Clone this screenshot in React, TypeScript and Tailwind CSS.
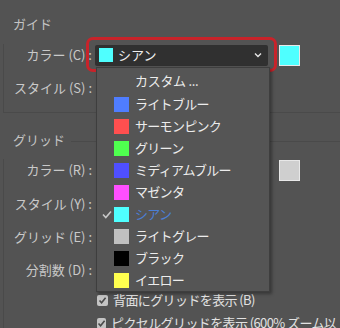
import React from "react";

const FONT = { fontFamily: '"Noto Sans CJK JP", "Noto Sans", sans-serif' };

const items: { name: string; color: string; selected?: boolean }[] = [
  { name: "ライトブルー", color: "#4f7dff" },
  { name: "サーモンピンク", color: "#ff4f4f" },
  { name: "グリーン", color: "#4fff4f" },
  { name: "ミディアムブルー", color: "#4f4fff" },
  { name: "マゼンタ", color: "#ff4fff" },
  { name: "シアン", color: "#4fffff", selected: true },
  { name: "ライトグレー", color: "#c0c0c0" },
  { name: "ブラック", color: "#000000" },
  { name: "イエロー", color: "#ffff4f" },
];

function Label({ children }: { children: React.ReactNode }) {
  return <div className="w-[88px] shrink-0 whitespace-pre text-right text-[#c9c9c9] leading-[22px]">{children}</div>;
}

function CheckBox({ children }: { children: React.ReactNode }) {
  return (
    <div className="flex h-[20px] items-center pl-[93px]">
      <div className="flex h-[11px] w-[11px] items-center justify-center rounded-[2px] bg-[#c4c4c4]">
        <svg width="9" height="9" viewBox="0 0 9 9">
          <polyline points="1.5,4.5 3.6,6.8 7.6,1.8" fill="none" stroke="#4a4a4a" strokeWidth="1.6" />
        </svg>
      </div>
      <span className="ml-[5px] whitespace-nowrap tracking-[-0.6px] text-[#e2e2e2]">{children}</span>
    </div>
  );
}

export default function App() {
  return (
    <div className="relative h-[328px] w-[340px] overflow-hidden bg-[#535353] text-[13px]" style={FONT}>
      {/* Group: guide */}
      <div className="pt-[14px]">
        <div className="flex h-[20px] items-center">
          <span className="pl-[13px] pr-[6px] text-[#c4c4c4]">ガイド</span>
        </div>
        <div className="ml-[3px] border-b border-l border-[#4a4a4a] pb-[13px]">
          <div className="mt-[10px] flex h-[22px] items-center">
            <Label>カラー (C) :</Label>
            <div className="ml-[3px] flex h-[21px] w-[173px] items-center rounded-[2px] bg-[#303030]">
              <div className="ml-[4px] h-[14px] w-[14px] bg-[#4fffff]" />
              <span className="ml-[5px] text-[#f0f0f0]">シアン</span>
              <svg className="ml-auto mr-[6px]" width="8" height="6" viewBox="0 0 8 6">
                <polyline points="1,1.5 4,4.5 7,1.5" fill="none" stroke="#e6e6e6" strokeWidth="1.4" />
              </svg>
            </div>
            <div className="ml-[11px] h-[21px] w-[21px] border border-[#e8e8e8] bg-[#4fffff]" />
          </div>
          <div className="mt-[11px] flex h-[22px] items-center">
            <Label>スタイル (S) :</Label>
          </div>
        </div>
      </div>

      {/* Group: grid */}
      <div className="mt-[17px]">
        <div className="flex h-[20px] items-center">
          <span className="pl-[13px] pr-[6px] text-[#c4c4c4]">グリッド</span>
          <div className="mt-[2px] h-px flex-1 bg-[#4a4a4a]" />
        </div>
        <div className="ml-[3px] border-l border-[#4a4a4a]">
          <div className="mt-[9px] flex h-[22px] items-center">
            <Label>カラー (R) :</Label>
            <div className="ml-[187px] h-[21px] w-[21px] border border-[#e8e8e8] bg-[#cfcfcf]" />
          </div>
          <div className="mt-[12px] flex h-[22px] items-center">
            <Label>スタイル (Y) :</Label>
          </div>
          <div className="mt-[11px] flex h-[22px] items-center">
            <Label>グリッド (E) :</Label>
          </div>
          <div className="mt-[11px] flex h-[22px] items-center">
            <Label>分割数 (D) :</Label>
          </div>
          <div className="mt-[9px]">
            <CheckBox>背面にグリッドを表示 (B)</CheckBox>
          </div>
          <div className="mt-[3px]">
            <CheckBox>ピクセルグリッドを表示 (600% ズーム以上)</CheckBox>
          </div>
        </div>
      </div>

      {/* Red annotation outline */}
      <div className="pointer-events-none absolute left-[86px] top-[37px] h-[35px] w-[191px] rounded-[7px] border-[3px] border-[#c8232a]" />

      {/* Dropdown menu */}
      <div className="absolute left-[96px] top-[67px] w-[174px] border border-[#3e3e3e] bg-[#555555] shadow-[2px_2px_3px_rgba(0,0,0,0.35)]">
        <div className="flex h-[25px] items-center pl-[38px] tracking-[-0.3px] text-[#ececec]">カスタム ...</div>
        {items.map((it) => (
          <div key={it.name} className="relative flex h-[22px] items-center">
            {it.selected && (
              <svg className="absolute left-[5px] top-[7px]" width="10" height="9" viewBox="0 0 10 9">
                <polyline points="1,4.5 3.8,7.5 9,1.5" fill="none" stroke="#c8c8c8" strokeWidth="1.6" />
              </svg>
            )}
            <div className="ml-[17px] h-[15px] w-[15px]" style={{ backgroundColor: it.color }} />
            <span className={"ml-[6px] tracking-[-0.7px] " + (it.selected ? "text-[#4b7fd6]" : "text-[#ececec]")}>{it.name}</span>
          </div>
        ))}
      </div>
    </div>
  );
}
